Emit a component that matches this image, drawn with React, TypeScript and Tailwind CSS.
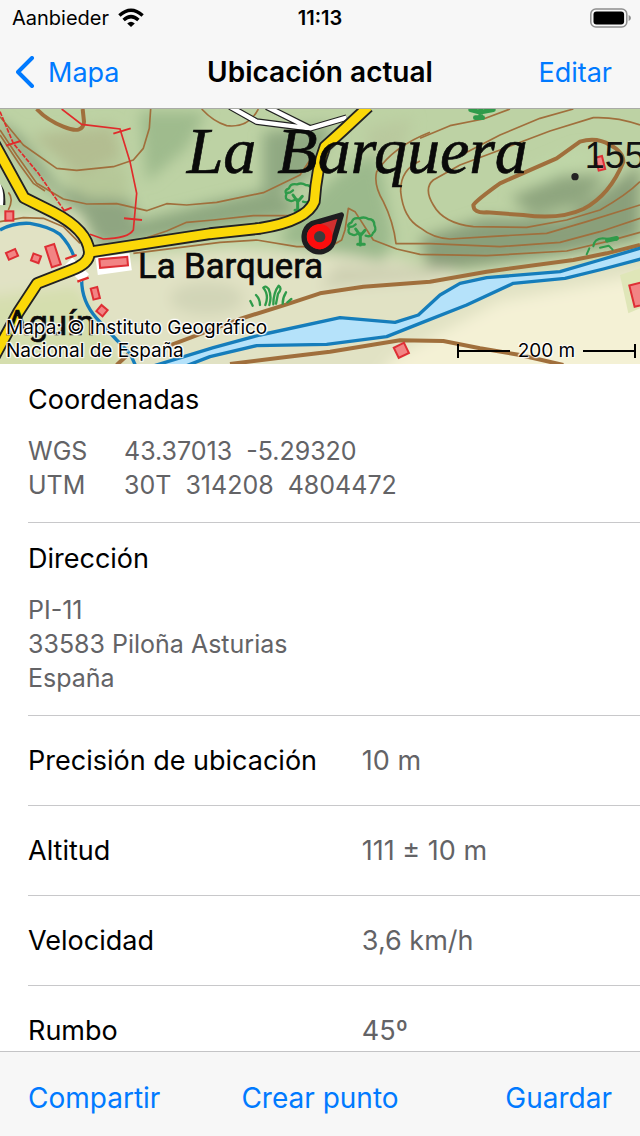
import type { ReactNode } from 'react';

const BUILDINGS = [
  { x: 28, y: 333, w: 24, h: 28, r: 0 },
  { x: 36, y: 448, w: 30, h: 22, r: -24 },
  { x: 108, y: 460, w: 24, h: 22, r: 20 },
  { x: 159, y: 452, w: 28, h: 64, r: -18 },
  { x: 341, y: 472, w: 84, h: 26, r: -5 },
  { x: 286, y: 565, w: 20, h: 34, r: -14 },
  { x: 306, y: 617, w: 24, h: 24, r: 40 },
  { x: 1204, y: 736, w: 34, h: 34, r: -26 },
  { x: 1801, y: 175, w: 20, h: 40, r: -14 },
  { x: 1925, y: 566, w: 60, h: 66, r: -14 },
];

const CONTOURS = [
  'M0 75 L50 150 L110 235 L190 282 L260 297 L350 296 L440 317 L500 296 L560 300 L650 292 L790 263 L900 210 L940 150',
  'M0 35 L70 120 L170 190 L230 196 L340 185 L400 165 L430 130 L448 70 L452 12',
  'M0 90 L60 180 L100 235 L135 258',
  'M605 12 Q640 50 680 62 Q745 70 775 12',
  'M0 350 L70 338 L130 340 L190 365 L240 415',
  'M400 412 L500 378 L560 352 L640 345 L760 332 L880 332',
  'M400 445 L560 425 L660 412 L770 405 L890 425 L990 425 L1025 405 L1035 375 L1045 310 L1065 320 L1120 405 L1190 432 L1260 448 L1460 452 L1700 438 L1820 410 L1920 382',
  'M1290 82 Q1180 125 1130 200 Q1120 240 1150 290 Q1180 350 1188 416 L1290 416 L1500 425 L1680 412 L1800 380 L1920 340',
  'M1260 168 Q1200 195 1202 260 Q1210 340 1260 368 Q1300 400 1350 402 L1480 394 L1640 385 L1760 350 L1920 300',
  'M1920 60 Q1850 35 1780 38 L1650 78 L1500 135 L1380 180 L1300 225 Q1270 250 1300 300 Q1330 355 1420 365 L1580 367 L1700 345 L1800 315 Q1880 270 1920 230',
  'M1260 100 L1350 62 L1450 42 L1530 12',
  'M1380 152 L1500 90 L1620 40 L1720 12',
  'M25 262 Q42 280 25 315',
];

const INDEX_CONTOURS = [
  'M110 12 Q140 45 190 65 Q250 90 252 50 L248 12',
  'M1420 300 Q1420 325 1460 322 L1570 330 Q1680 345 1750 312 Q1830 270 1870 170 Q1870 140 1830 120 Q1790 95 1740 110 L1670 160 L1500 235 Q1430 285 1420 300 Z',
  'M500 725 L720 642 L860 598 L960 565 L1090 545 L1290 530 L1460 500 L1720 465 L1820 445 L1920 420',
  'M690 777 L840 758 L990 740 L1200 706 L1330 708 L1440 730 L1560 750 L1690 780',
  'M350 780 L385 748',
];

const ROAD = 'M-20 110 L72 278 L160 322 Q262 375 268 440 Q270 475 215 495 L112 535 L55 622 L-20 760';
const MAIN_ROAD = 'M270 441 L630 386 L780 370 Q920 348 943 290 Q950 190 975 125 L1030 75 L1105 5';
const RIVER_TOP = 'M450 786 L640 728 L780 690 L1020 638 L1185 652 L1255 630 L1320 570 L1380 535 L1460 518 L1680 500 L1800 465 L1930 427';
const RIVER_BOTTOM = 'M1930 460 L1810 492 L1695 520 L1540 535 L1400 600 L1260 655 L1160 695 L980 718 L770 722 L630 755 L560 782';

function Tree({ x, y }: { x: number; y: number }) {
  return (
    <g transform={`translate(${x} ${y})`} fill="none" stroke="#2f9b4a" strokeLinecap="round" strokeLinejoin="round">
      <path d="M-8 12 Q-18 22 -28 16 Q-42 12 -36 -2 Q-44 -14 -28 -20 Q-24 -36 -4 -32 Q10 -38 22 -30 Q40 -30 40 -12 Q48 4 36 12 Q32 26 14 20 M-34 -6 L-24 -8 L-16 -14" strokeWidth="7" />
      <path d="M-2 48 V14 M-16 0 L-2 20 L12 4 M-10 46 H10" strokeWidth="9" />
    </g>
  );
}

function TopoMap() {
  return (
    <svg className="block h-full w-full" viewBox="0 12 1920 765" preserveAspectRatio="xMidYMid slice" role="img" aria-label="La Barquera">
      <defs>
        <filter id="soft" x="-30%" y="-30%" width="160%" height="160%">
          <feGaussianBlur stdDeviation="20" />
        </filter>
      </defs>
      <rect y="0" width="1920" height="790" fill="#bdd2a4" />
      <g filter="url(#soft)">
        <path d="M-80 320 L230 330 L280 460 L700 430 L1180 460 L1400 520 L2000 440 V860 H-80 Z" fill="#e1e2c4" />
        <path d="M1180 760 L1500 590 L1980 500 V860 H1100 Z" fill="#f4f1d5" />
        <path d="M-60 580 L230 540 L330 700 L400 830 H-60 Z" fill="#d5deae" />
        <path d="M-40 20 L100 210 L250 330 L300 425 L410 405 L400 290 L180 250 L60 90 Z" fill="#8fa581" />
        <path d="M410 350 L640 290 L820 250 L900 300 L850 340 L640 370 L400 410 Z" fill="#8ea780" />
        <path d="M420 20 H620 L560 130 L440 230 Z" fill="#9fbb8d" />
        <path d="M90 90 L340 60 L370 160 L230 210 Z" fill="#b3bd91" />
        <path d="M180 210 L380 180 L390 280 L260 280 Z" fill="#b6c798" />
        <path d="M790 80 L1000 60 L930 220 L790 280 Z" fill="#90a982" />
        <path d="M1000 220 L1130 130 L1180 400 L1150 470 L990 440 L840 420 L860 360 Z" fill="#9bb98c" />
        <path d="M1260 400 L1450 340 L1700 340 L1920 180 V400 L1700 445 L1290 500 Z" fill="#8a9f7a" />
        <path d="M1530 280 L1680 210 L1820 210 L1750 300 L1600 330 Z" fill="#8fa67f" />
        <path d="M1550 210 L1740 130 L1800 150 L1640 230 Z" fill="#bfd7a8" />
        <path d="M1100 70 L1240 40 L1200 150 L1110 160 Z" fill="#b9c99e" />
        <path d="M1010 480 L1370 490 L1280 525 L960 550 Z" fill="#ced0b2" />
        <ellipse cx="620" cy="580" rx="110" ry="50" fill="#d2d5b7" />
      </g>
      <path d="M1860 510 L1920 490 V610 L1885 625 Z" fill="#dfe6b8" />

      <g fill="none" stroke="#a06f3c" strokeLinejoin="round">
        {CONTOURS.map((d) => (
          <path key={d} d={d} strokeWidth="5" />
        ))}
        {INDEX_CONTOURS.map((d) => (
          <path key={d} d={d} strokeWidth="12" />
        ))}
      </g>

      <g fill="none" stroke="#e02b2b" strokeWidth="5">
        <path d="M185 12 L245 58 L360 72 L390 170 L410 265 L400 375 Q385 400 310 402 L270 388" />
        <path d="M0 20 L40 115 L115 205 L195 320" strokeDasharray="14 4" />
        <path d="M18 122 L62 108 M340 86 L392 70 M372 340 L426 345 M190 318 L215 308" strokeWidth="6" />
      </g>

      <path d={`${RIVER_TOP} L1930 460 ${RIVER_BOTTOM.slice(10)} Z`} fill="#b5e2fa" />
      <g fill="none" stroke="#157dbb" strokeWidth="10" strokeLinejoin="round">
        <path d={RIVER_TOP} />
        <path d={RIVER_BOTTOM} />
        <path d="M0 375 Q40 352 90 355 Q150 365 180 388 Q210 420 222 455 M245 525 Q245 590 290 640 L350 705 L390 745 L408 785" />
      </g>

      <Tree x={895} y={270} />
      <Tree x={1083} y={372} />
      <g fill="none" stroke="#2f9b4a" strokeLinecap="round" strokeLinejoin="round">
        <path d="M1412 14 L1440 22 L1480 14 M1442 14 V38 M1426 38 H1448" strokeWidth="14" />
        <path d="M1760 448 L1768 430 M1780 424 Q1782 402 1808 400 L1850 404 M1800 428 L1826 422 L1838 434" strokeWidth="6" />
        <path d="M1822 406 L1850 400" strokeWidth="14" />
        <path d="M758 602 L751 588 M780 600 Q780 582 768 570 M796 600 Q808 570 790 548 Q796 540 806 552 Q816 574 808 600 M820 598 Q820 562 836 542 Q848 550 834 566 L828 596 M848 596 Q848 578 858 562 M862 592 L874 582" strokeWidth="7" />
      </g>

      <g fill="none" strokeLinejoin="round">
        <path d="M690 5 L770 50 L930 70 L1040 38 M800 5 L930 70" stroke="#222" strokeWidth="20" />
        <path d="M690 5 L770 50 L930 70 L1040 38 M800 5 L930 70" stroke="#fff" strokeWidth="13" />
        <path d="M-5 240 Q14 245 12 300" stroke="#222" strokeWidth="8" />
        <path d="M-5 240 Q6 260 2 300" stroke="#fff" strokeWidth="14" />
        <path d="M205 470 L255 520" stroke="#fff" strokeWidth="34" />
        <path d="M290 484 L392 470" stroke="#fff" strokeWidth="52" />
        <path d={ROAD} stroke="#222" strokeWidth="38" />
        <path d={MAIN_ROAD} stroke="#222" strokeWidth="38" />
        <path d={ROAD} stroke="#fbd808" strokeWidth="27" />
        <path d={MAIN_ROAD} stroke="#fbd808" strokeWidth="27" />
        <path d="M196 462 L230 450 M232 530 L266 518" stroke="#e02b2b" strokeWidth="7" />
      </g>

      <g fill="#f28484" stroke="#de2f35" strokeWidth="6">
        {BUILDINGS.map((b) => (
          <rect
            key={`${b.x}-${b.y}`}
            x={b.x - b.w / 2}
            y={b.y - b.h / 2}
            width={b.w}
            height={b.h}
            transform={`rotate(${b.r} ${b.x} ${b.y})`}
          />
        ))}
      </g>

      <g className="font-['Liberation_Serif',serif] italic" fill="#0a0a0a" stroke="#0a0a0a" strokeWidth="2" fontSize="198">
        <text x="560" y="205">La</text>
        <text x="832" y="205">Barquera</text>
      </g>
      <g className="font-['Liberation_Sans_Narrow',Roboto,sans-serif]" fill="#0a0a0a" stroke="#0a0a0a" strokeWidth="2" fontSize="104">
        <text x="414" y="519">La Barquera</text>
        <text x="18" y="690">Aguín</text>
      </g>
      <text className="font-['Liberation_Sans',sans-serif]" x="1754" y="188" fill="#111" fontSize="108">155</text>
      <circle cx="1725" cy="215" r="11" fill="#222" />

      <path d="M1024 330 L1000 410 A45 45 0 1 1 936 356 Z" fill="#cf2f2f" stroke="#1d1d1f" strokeWidth="16" strokeLinejoin="round" />
      <circle cx="959" cy="395" r="27" fill="none" stroke="#fb0d0d" strokeWidth="22" />
      <circle cx="959" cy="395" r="17" fill="#3c3c3c" />
    </svg>
  );
}

function StatusBar() {
  return (
    <div className="grid h-9 grid-cols-3 items-center px-3 text-[20px] leading-none">
      <div className="flex items-center gap-2">
        <span>Aanbieder</span>
        <svg className="h-5 w-7" viewBox="0 0 28 20" fill="none" stroke="#000" strokeWidth="3.4">
          <path d="M2.4 7.6 Q14 -3 25.6 7.6" />
          <path d="M6.6 12 Q14 5.2 21.4 12" />
          <path d="M10.2 15.4 Q14 12 17.8 15.4 L14 19 Z" fill="#000" stroke="none" />
        </svg>
      </div>
      <span className="text-center font-semibold">11:13</span>
      <svg className="-mr-1 h-5 w-11 justify-self-end" viewBox="0 0 44 20">
        <rect x="2.8" y="1" width="36" height="18" rx="5" fill="none" stroke="#8f8f8f" strokeWidth="1.5" />
        <rect x="5.5" y="3.6" width="30.6" height="12.8" rx="3" />
        <path d="M40.6 7 Q43 8 43 10 Q43 12 40.6 13 Z" fill="#8f8f8f" />
      </svg>
    </div>
  );
}

function Section({ title, children }: { title: string; children: ReactNode }) {
  return (
    <section className="ml-7 border-b border-[#c8c8ca] pt-4.5 pb-5">
      <h2 className="mb-4 text-[27px] leading-9">{title}</h2>
      <div className="text-[25px] leading-[34px] text-[#636366]">{children}</div>
    </section>
  );
}

const COORDS = [
  { system: 'WGS', value: '43.37013  -5.29320' },
  { system: 'UTM', value: '30T  314208  4804472' },
];

const ROWS = [
  { label: 'Precisión de ubicación', value: '10 m' },
  { label: 'Altitud', value: '111 ± 10 m' },
  { label: 'Velocidad', value: '3,6 km/h' },
  { label: 'Rumbo', value: '45º' },
];

export default function App() {
  return (
    <div className="flex h-screen flex-col overflow-hidden bg-white font-[Inter,sans-serif] text-black">
      <header className="shrink-0 border-b border-[#a9aba6] bg-[#f7f7f7]">
        <StatusBar />
        <div className="grid h-[72px] grid-cols-[1fr_auto_1fr] items-center px-4 text-[27px] leading-none">
          <button type="button" className="flex items-center gap-3 text-[#007aff]">
            <svg className="h-8 w-5" viewBox="0 0 20 32" fill="none" stroke="currentColor" strokeWidth="4" strokeLinecap="round" strokeLinejoin="round">
              <path d="M16 2 L2 16 L16 30" />
            </svg>
            Mapa
          </button>
          <h1 className="text-[28px] font-semibold">Ubicación actual</h1>
          <button type="button" className="justify-self-end pr-3 text-[#007aff]">Editar</button>
        </div>
      </header>

      <main className="min-h-0 flex-1 overflow-hidden">
        <div className="relative h-[255px] overflow-hidden">
          <TopoMap />
          <p className="absolute bottom-0.5 left-1.5 max-w-72 text-[19px] leading-[23px] [text-shadow:0_0_2px_#fff,0_0_2px_#fff,1px_1px_1px_#fff,-1px_-1px_1px_#fff,1px_-1px_1px_#fff,-1px_1px_1px_#fff]">
            Mapa: © Instituto Geográfico Nacional de España
          </p>
          <div className="absolute right-1 bottom-0.5 flex w-[179px] items-center gap-2 text-[19px] leading-[23px] [text-shadow:0_0_2px_#fff,0_0_2px_#fff,1px_1px_1px_#fff,-1px_-1px_1px_#fff]">
            <span className="flex h-3.5 flex-1 items-center border-l-2 border-black">
              <span className="h-0.5 w-full bg-black" />
            </span>
            200 m
            <span className="flex h-3.5 flex-1 items-center border-r-2 border-black">
              <span className="h-0.5 w-full bg-black" />
            </span>
          </div>
        </div>

        <Section title="Coordenadas">
          <dl>
            {COORDS.map((c) => (
              <div key={c.system} className="flex">
                <dt className="w-24">{c.system}</dt>
                <dd className="whitespace-pre">{c.value}</dd>
              </div>
            ))}
          </dl>
        </Section>

        <Section title="Dirección">
          <address className="not-italic">
            PI-11
            <br />
            33583 Piloña Asturias
            <br />
            España
          </address>
        </Section>

        <dl className="ml-7 text-[27px] leading-9">
          {ROWS.map((row) => (
            <div key={row.label} className="grid h-[90px] grid-cols-[6fr_5fr] items-center border-b border-[#c8c8ca]">
              <dt>{row.label}</dt>
              <dd className="text-[#636366]">{row.value}</dd>
            </div>
          ))}
        </dl>
      </main>

      <footer className="grid h-[85px] shrink-0 grid-cols-3 items-center border-t border-[#c4c4c6] bg-[#f7f7f7] px-7 pt-2 text-[28px] text-[#007aff]">
        <button type="button" className="justify-self-start">Compartir</button>
        <button type="button" className="justify-self-center whitespace-nowrap">Crear punto</button>
        <button type="button" className="justify-self-end">Guardar</button>
      </footer>
    </div>
  );
}
